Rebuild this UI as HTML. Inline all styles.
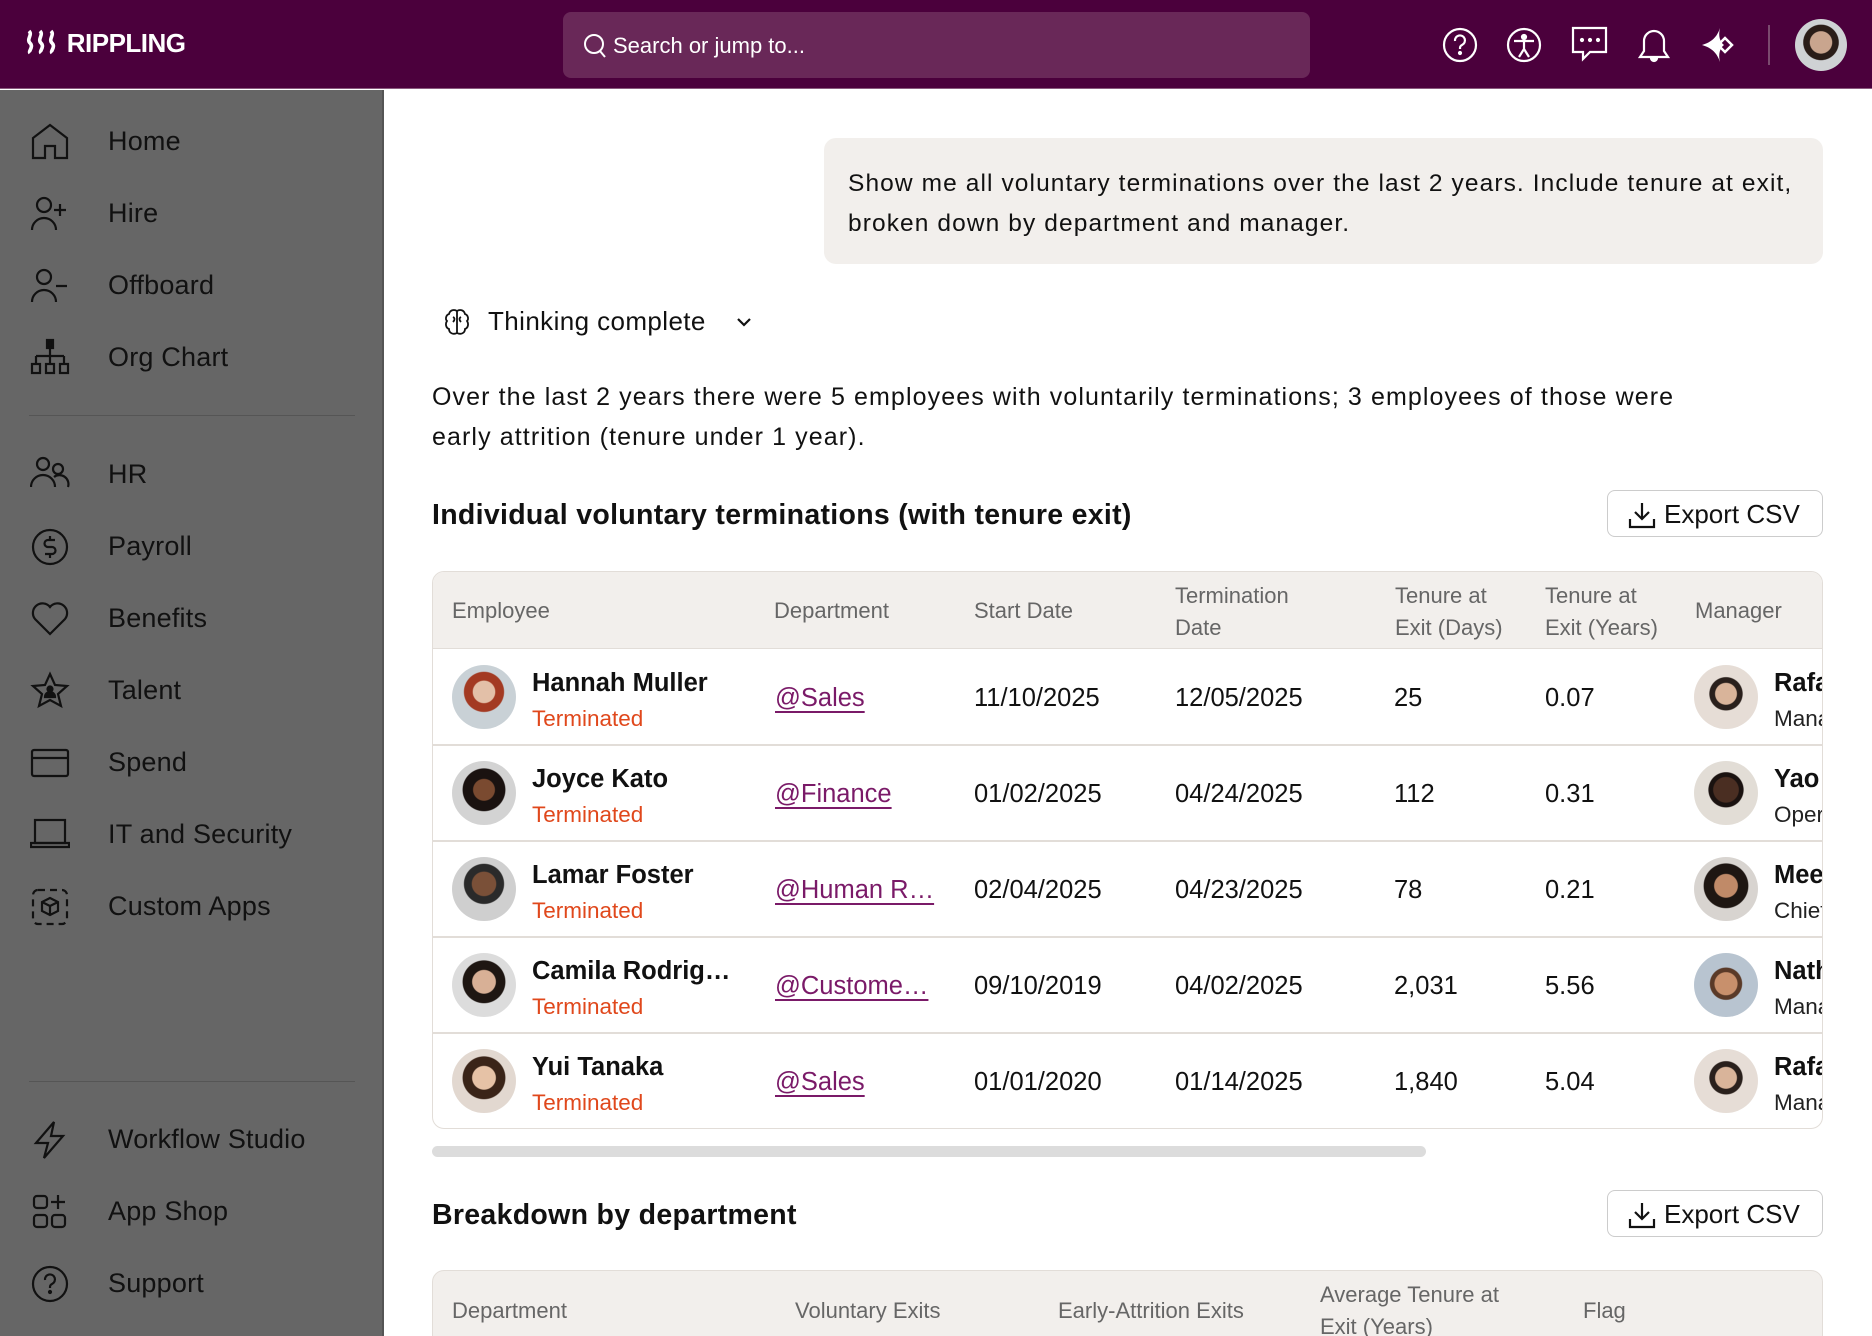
<!DOCTYPE html>
<html><head><meta charset="utf-8"><style>
*{box-sizing:border-box;margin:0;padding:0}
html{overflow:hidden;width:1872px;height:1336px}
body{width:1872px;height:1336px;overflow:hidden;font-family:"Liberation Sans",sans-serif;background:#fff;position:relative;color:#111}
.hdr{position:absolute;left:0;top:0;width:1872px;height:89px;background:#4b003c;border-bottom:1px solid #8a5a7e}
.logo{position:absolute;left:26px;top:28px;color:#fff;font-weight:bold;font-size:26px;letter-spacing:-0.5px}
.search{position:absolute;left:563px;top:12px;width:747px;height:66px;background:#692858;border-radius:8px;color:#fff;font-size:22px;padding:21px 0 0 50px}
.search svg{position:absolute;left:19px;top:21px}
.side{position:absolute;left:0;top:90px;width:384px;height:1246px;background:#666;border-right:2px solid #555}
.nav{position:absolute;left:0;height:40px;width:384px;font-size:27px;color:#111;letter-spacing:0.2px}
.nav span{position:absolute;left:108px;top:4px}
.nav svg{position:absolute;left:30px;top:0}
.div{position:absolute;left:29px;width:326px;height:1px;background:#555}
.bubble{position:absolute;left:824px;top:138px;width:999px;height:126px;background:#f2efec;border-radius:12px;font-size:24.5px;line-height:40px;padding:26px 0 0 24px;letter-spacing:1.1px;white-space:nowrap}
.think{position:absolute;left:444px;top:306px;font-size:26px;letter-spacing:0.4px}
.para{position:absolute;left:432px;top:377px;font-size:25px;line-height:40px;width:1400px;letter-spacing:1.1px;white-space:nowrap}
h2{position:absolute;font-size:28.5px;font-weight:bold;left:432px;letter-spacing:0.3px}
.btn{position:absolute;left:1607px;width:216px;height:47px;border:1.5px solid #ccc;border-radius:8px;font-size:26px;padding:8px 0 0 56px}
.btn svg{position:absolute;left:20px;top:10px}
.tbl{position:absolute;left:432px;width:1391px;border:1.5px solid #e2ddd8;border-radius:12px;overflow:hidden}
.th{position:absolute;font-size:22px;color:#666;line-height:32px}
.cell{position:absolute;font-size:25.5px}
.av{position:absolute;width:64px;height:64px;border-radius:50%}
.nm{position:absolute;font-size:25.5px;font-weight:bold}
.term{position:absolute;font-size:22.5px;color:#e0481c}
.dep{position:absolute;font-size:25.5px;color:#7a1a68;text-decoration:underline;text-decoration-thickness:2px;text-underline-offset:5px}
.sub{position:absolute;font-size:22.5px;color:#222}
</style></head><body>
<div class="hdr">
 <div class="logo"><svg width="34" height="26" viewBox="0 0 34 26" style="vertical-align:-3px"><g fill="none" stroke="#fff" stroke-width="3.6"><path d="M3 2c4 4-3 8 1 12s-2 8 0 10"/><path d="M14 2c4 4-3 8 1 12s-2 8 0 10"/><path d="M25 2c4 4-3 8 1 12s-2 8 0 10"/></g></svg> RIPPLING</div>
 <div class="search"><svg width="26" height="26" viewBox="0 0 26 26" fill="none" stroke="#fff" stroke-width="2"><circle cx="12" cy="11" r="9"/><path d="M18 18l5 6"/></svg>Search or jump to...</div>
 <svg style="position:absolute;left:1440px;top:25px" width="40" height="40" viewBox="0 0 40 40" fill="none" stroke="#fff" stroke-width="2.2"><circle cx="20" cy="20" r="16"/><path d="M15 16a5 5 0 1 1 7 4c-2 1-2 2-2 4"/><circle cx="20" cy="28" r="1" fill="#fff"/></svg>
 <svg style="position:absolute;left:1504px;top:25px" width="40" height="40" viewBox="0 0 40 40" fill="none" stroke="#fff" stroke-width="2.2"><circle cx="20" cy="20" r="16"/><circle cx="20" cy="12" r="2" fill="#fff"/><path d="M10 16h20M20 16v8l-5 8M20 24l5 8"/></svg>
 <svg style="position:absolute;left:1570px;top:25px" width="40" height="40" viewBox="0 0 40 40" fill="none" stroke="#fff" stroke-width="2.2"><path d="M3 3h33v24H20l-7 7v-7H3z"/><circle cx="12" cy="15" r="1" fill="#fff"/><circle cx="20" cy="15" r="1" fill="#fff"/><circle cx="28" cy="15" r="1" fill="#fff"/></svg>
 <svg style="position:absolute;left:1634px;top:25px" width="40" height="40" viewBox="0 0 40 40" fill="none" stroke="#fff" stroke-width="2.2"><path d="M6 32h28l-4-6V16a10 10 0 0 0-20 0v10z"/><path d="M17 33a3 3 0 0 0 6 0" fill="#fff"/></svg>
 <svg style="position:absolute;left:1698px;top:25px" width="40" height="40" viewBox="0 0 40 40" fill="#fff"><path d="M22 3c-3 9-8 14-18 17 10 3 15 8 18 17-2-8 0-14 4-17-4-3-6-9-4-17z"/><path d="M27 13l7 7-7 7-7-7z" fill="none" stroke="#fff" stroke-width="2.5"/></svg>
 <div style="position:absolute;left:1768px;top:25px;width:2px;height:40px;background:#7a4a6e"></div>
 <div style="position:absolute;left:1795px;top:19px;width:52px;height:52px;border-radius:50%;background:radial-gradient(circle at 50% 45%,#c9a58e 0 28%,#2a1d18 30% 45%,#cfd2d4 47%)"></div>
</div>

<div class="side">
 <div class="nav" style="top:32px"><svg width="40" height="40" viewBox="0 0 40 40" fill="none" stroke="#111" stroke-width="2.2"><path d="M3 36V16L20 3l17 13v20H25V24h-10v12z"/></svg><span>Home</span></div>
 <div class="nav" style="top:104px"><svg width="40" height="40" viewBox="0 0 40 40" fill="none" stroke="#111" stroke-width="2.2"><circle cx="14" cy="11" r="7"/><path d="M2 36a12 12 0 0 1 24 0M30 10v12M24 16h12"/></svg><span>Hire</span></div>
 <div class="nav" style="top:176px"><svg width="40" height="40" viewBox="0 0 40 40" fill="none" stroke="#111" stroke-width="2.2"><circle cx="14" cy="11" r="7"/><path d="M2 36a12 12 0 0 1 24 0M26 20h11"/></svg><span>Offboard</span></div>
 <div class="nav" style="top:248px"><svg width="40" height="40" viewBox="0 0 40 40" fill="none" stroke="#111" stroke-width="2.2"><rect x="17" y="2" width="6" height="8" fill="#111"/><path d="M20 10v8M6 18h28M6 18v7M20 18v7M34 18v7"/><rect x="2" y="26" width="8" height="9"/><rect x="16" y="26" width="8" height="9"/><rect x="30" y="26" width="8" height="9"/></svg><span>Org Chart</span></div>
 <div class="div" style="top:325px"></div>
 <div class="nav" style="top:365px"><svg width="40" height="40" viewBox="0 0 40 40" fill="none" stroke="#111" stroke-width="2.2"><circle cx="13" cy="9" r="6"/><circle cx="28" cy="14" r="5"/><path d="M1 32a12 12 0 0 1 24 0M24 22a9 9 0 0 1 14 10"/></svg><span>HR</span></div>
 <div class="nav" style="top:437px"><svg width="40" height="40" viewBox="0 0 40 40" fill="none" stroke="#111" stroke-width="2.2"><circle cx="20" cy="20" r="17"/><path d="M25 13h-7a3.5 3.5 0 0 0 0 7h4a3.5 3.5 0 0 1 0 7h-7M20 9v4M20 27v4"/></svg><span>Payroll</span></div>
 <div class="nav" style="top:509px"><svg width="40" height="40" viewBox="0 0 40 40" fill="none" stroke="#111" stroke-width="2.2"><path d="M20 35L5 20a8 8 0 0 1 15-12 8 8 0 0 1 15 12z"/></svg><span>Benefits</span></div>
 <div class="nav" style="top:581px"><svg width="40" height="40" viewBox="0 0 40 40" fill="none" stroke="#111" stroke-width="2.2"><path d="M20 3l5 11 12 1-9 8 3 12-11-6-11 6 3-12-9-8 12-1z"/><circle cx="20" cy="18" r="2.5" fill="#111"/><path d="M15 26a5 5 0 0 1 10 0z" fill="#111"/></svg><span>Talent</span></div>
 <div class="nav" style="top:653px"><svg width="40" height="40" viewBox="0 0 40 40" fill="none" stroke="#111" stroke-width="2.2"><rect x="2" y="7" width="36" height="26" rx="2"/><path d="M2 15h36"/></svg><span>Spend</span></div>
 <div class="nav" style="top:725px"><svg width="40" height="40" viewBox="0 0 40 40" fill="none" stroke="#111" stroke-width="2.2"><rect x="5" y="5" width="30" height="23"/><path d="M1 28h38v4H1z"/></svg><span>IT and Security</span></div>
 <div class="nav" style="top:797px"><svg width="40" height="40" viewBox="0 0 40 40" fill="none" stroke="#111" stroke-width="2.2"><rect x="3" y="3" width="34" height="34" rx="5" stroke-dasharray="7 5"/><path d="M20 11l8 4v9l-8 4-8-4v-9zM12 15l8 4 8-4M20 19v9"/></svg><span>Custom Apps</span></div>
 <div class="div" style="top:991px"></div>
 <div class="nav" style="top:1030px"><svg width="40" height="40" viewBox="0 0 40 40" fill="none" stroke="#111" stroke-width="2.2"><path d="M24 2L6 23h12l-4 15 19-22H21z"/></svg><span>Workflow Studio</span></div>
 <div class="nav" style="top:1102px"><svg width="40" height="40" viewBox="0 0 40 40" fill="none" stroke="#111" stroke-width="2.2"><rect x="4" y="4" width="13" height="12" rx="3"/><rect x="4" y="23" width="13" height="12" rx="3"/><rect x="22" y="23" width="13" height="12" rx="3"/><path d="M28 3v14M21 10h14"/></svg><span>App Shop</span></div>
 <div class="nav" style="top:1174px"><svg width="40" height="40" viewBox="0 0 40 40" fill="none" stroke="#111" stroke-width="2.2"><circle cx="20" cy="20" r="17"/><path d="M15 16a5 5 0 1 1 7 4c-2 1-2 2-2 4"/><circle cx="20" cy="28" r="1" fill="#111"/></svg><span>Support</span></div>
</div>

<div class="bubble">Show me all voluntary terminations over the last 2 years. Include tenure at exit,<br>broken down by department and manager.</div>
<div class="think"><svg style="position:absolute;left:0;top:2px" width="26" height="30" viewBox="0 0 26 30" fill="none" stroke="#111" stroke-width="1.8"><path d="M13 3c-3-2-7-1-8 3-3 1-4 5-2 7-2 3-1 7 2 8 0 4 4 6 8 4 4 2 8 0 8-4 3-1 4-5 2-8 2-2 1-6-2-7-1-4-5-5-8-3zM13 3v22M9 9c2 1 2 3 0 5M17 9c-2 1-2 3 0 5"/></svg><span style="position:absolute;left:44px;top:0;white-space:nowrap">Thinking complete</span><svg style="position:absolute;left:292px;top:10px" width="16" height="12" viewBox="0 0 16 12" fill="none" stroke="#111" stroke-width="2.2"><path d="M2 3l6 6 6-6"/></svg></div>
<div class="para">Over the last 2 years there were 5 employees with voluntarily terminations; 3 employees of those were<br>early attrition (tenure under 1 year).</div>

<h2 style="top:499px">Individual voluntary terminations (with tenure exit)</h2>
<div class="btn" style="top:490px"><svg width="28" height="28" viewBox="0 0 28 28" fill="none" stroke="#111" stroke-width="2.2"><path d="M14 2v16M7 11l7 7 7-7M2 18v8h24v-8"/></svg>Export CSV</div>

<div class="tbl" style="top:571px;height:558px">
 <div style="position:absolute;left:0;top:0;width:100%;height:77px;background:#f2efec;border-bottom:1.5px solid #e2ddd8"></div>
 <div class="th" style="left:19px;top:23px">Employee</div>
 <div class="th" style="left:341px;top:23px">Department</div>
 <div class="th" style="left:541px;top:23px">Start Date</div>
 <div class="th" style="left:742px;top:8px">Termination<br>Date</div>
 <div class="th" style="left:962px;top:8px">Tenure at<br>Exit (Days)</div>
 <div class="th" style="left:1112px;top:8px">Tenure at<br>Exit (Years)</div>
 <div class="th" style="left:1262px;top:23px">Manager</div>
</div>

<div style="position:absolute;left:432px;top:1146px;width:994px;height:11px;border-radius:6px;background:#dcdcdc"></div>

<h2 style="top:1199px">Breakdown by department</h2>
<div class="btn" style="top:1190px"><svg width="28" height="28" viewBox="0 0 28 28" fill="none" stroke="#111" stroke-width="2.2"><path d="M14 2v16M7 11l7 7 7-7M2 18v8h24v-8"/></svg>Export CSV</div>
<div class="tbl" style="top:1270px;height:120px;background:#f2efec">
 <div class="th" style="left:19px;top:24px">Department</div>
 <div class="th" style="left:362px;top:24px">Voluntary Exits</div>
 <div class="th" style="left:625px;top:24px">Early-Attrition Exits</div>
 <div class="th" style="left:887px;top:8px">Average Tenure at<br>Exit (Years)</div>
 <div class="th" style="left:1150px;top:24px">Flag</div>
</div>

<div style="position:absolute;left:433px;top:744px;width:1389px;height:2px;background:#e2ddd8"></div>
<div style="position:absolute;left:433px;top:840px;width:1389px;height:2px;background:#e2ddd8"></div>
<div style="position:absolute;left:433px;top:936px;width:1389px;height:2px;background:#e2ddd8"></div>
<div style="position:absolute;left:433px;top:1032px;width:1389px;height:2px;background:#e2ddd8"></div>

<div style="position:absolute;left:0;top:0;width:1822px;height:1336px;overflow:hidden">
 <div class="av" style="left:452px;top:665px;background:radial-gradient(circle at 50% 42%,#e3c0a8 0 22%,#a33a22 24% 40%,#c9d1d6 42%)"></div>
 <div class="nm" style="left:532px;top:669px">Hannah Muller</div><div class="term" style="left:532px;top:706px">Terminated</div>
 <div class="dep" style="left:775px;top:684px">@Sales</div>
 <div class="cell" style="left:974px;top:684px">11/10/2025</div><div class="cell" style="left:1175px;top:684px">12/05/2025</div>
 <div class="cell" style="left:1394px;top:684px">25</div><div class="cell" style="left:1545px;top:684px">0.07</div>
 <div class="av" style="left:1694px;top:665px;background:radial-gradient(circle at 50% 45%,#d9b49a 0 22%,#2a201c 24% 34%,#e6ddd6 36%)"></div>
 <div class="nm" style="left:1774px;top:669px">Rafael</div><div class="sub" style="left:1774px;top:706px">Manager</div>

 <div class="av" style="left:452px;top:761px;background:radial-gradient(circle at 50% 45%,#7a4a30 0 22%,#1a1210 24% 44%,#d3d3d3 46%)"></div>
 <div class="nm" style="left:532px;top:765px">Joyce Kato</div><div class="term" style="left:532px;top:802px">Terminated</div>
 <div class="dep" style="left:775px;top:780px">@Finance</div>
 <div class="cell" style="left:974px;top:780px">01/02/2025</div><div class="cell" style="left:1175px;top:780px">04/24/2025</div>
 <div class="cell" style="left:1394px;top:780px">112</div><div class="cell" style="left:1545px;top:780px">0.31</div>
 <div class="av" style="left:1694px;top:761px;background:radial-gradient(circle at 50% 45%,#4a2e22 0 26%,#1a1210 28% 36%,#e2ddd6 38%)"></div>
 <div class="nm" style="left:1774px;top:765px">Yao</div><div class="sub" style="left:1774px;top:802px">Operations</div>

 <div class="av" style="left:452px;top:857px;background:radial-gradient(circle at 50% 42%,#7a5038 0 24%,#2a2a2a 26% 40%,#cfcfcf 42%)"></div>
 <div class="nm" style="left:532px;top:861px">Lamar Foster</div><div class="term" style="left:532px;top:898px">Terminated</div>
 <div class="dep" style="left:775px;top:876px">@Human R…</div>
 <div class="cell" style="left:974px;top:876px">02/04/2025</div><div class="cell" style="left:1175px;top:876px">04/23/2025</div>
 <div class="cell" style="left:1394px;top:876px">78</div><div class="cell" style="left:1545px;top:876px">0.21</div>
 <div class="av" style="left:1694px;top:857px;background:radial-gradient(circle at 50% 45%,#c08a68 0 24%,#1e1612 26% 46%,#d8d4d0 48%)"></div>
 <div class="nm" style="left:1774px;top:861px">Meera</div><div class="sub" style="left:1774px;top:898px">Chief</div>

 <div class="av" style="left:452px;top:953px;background:radial-gradient(circle at 50% 45%,#d8b096 0 24%,#1e1612 26% 44%,#dcdcdc 46%)"></div>
 <div class="nm" style="left:532px;top:957px">Camila Rodrig…</div><div class="term" style="left:532px;top:994px">Terminated</div>
 <div class="dep" style="left:775px;top:972px">@Custome…</div>
 <div class="cell" style="left:974px;top:972px">09/10/2019</div><div class="cell" style="left:1175px;top:972px">04/02/2025</div>
 <div class="cell" style="left:1394px;top:972px">2,031</div><div class="cell" style="left:1545px;top:972px">5.56</div>
 <div class="av" style="left:1694px;top:953px;background:radial-gradient(circle at 50% 48%,#c8906c 0 24%,#5a3a28 26% 34%,#b8c4d0 36%)"></div>
 <div class="nm" style="left:1774px;top:957px">Nathan</div><div class="sub" style="left:1774px;top:994px">Manager</div>

 <div class="av" style="left:452px;top:1049px;background:radial-gradient(circle at 50% 45%,#e6c2a6 0 24%,#3a2418 26% 44%,#e2d8d0 46%)"></div>
 <div class="nm" style="left:532px;top:1053px">Yui Tanaka</div><div class="term" style="left:532px;top:1090px">Terminated</div>
 <div class="dep" style="left:775px;top:1068px">@Sales</div>
 <div class="cell" style="left:974px;top:1068px">01/01/2020</div><div class="cell" style="left:1175px;top:1068px">01/14/2025</div>
 <div class="cell" style="left:1394px;top:1068px">1,840</div><div class="cell" style="left:1545px;top:1068px">5.04</div>
 <div class="av" style="left:1694px;top:1049px;background:radial-gradient(circle at 50% 45%,#d9b49a 0 22%,#2a201c 24% 34%,#e6ddd6 36%)"></div>
 <div class="nm" style="left:1774px;top:1053px">Rafael</div><div class="sub" style="left:1774px;top:1090px">Manager</div>
</div>
</body></html>
